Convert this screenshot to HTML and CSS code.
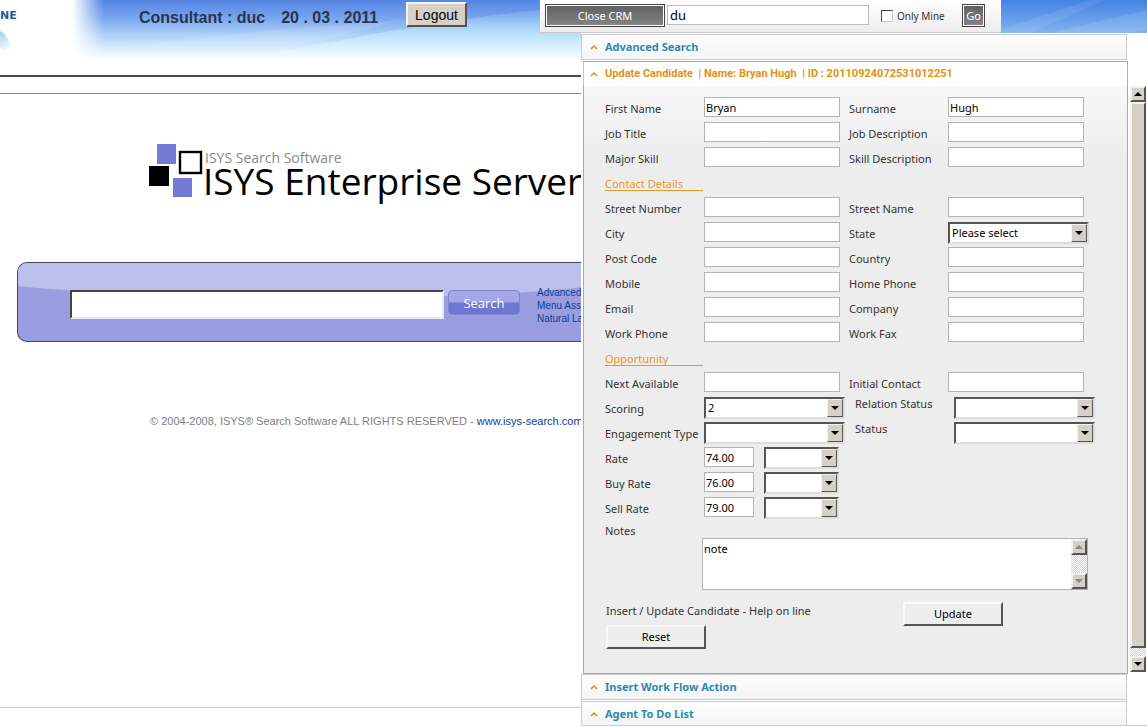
FILE: index.html
```html
<!DOCTYPE html>
<html lang="en">
<head>
<meta charset="utf-8">
<title>Update Candidate</title>
<link rel="stylesheet" href="styles.css">
</head>
<body>
<svg class="sky" viewBox="0 0 1075 58" preserveAspectRatio="none" aria-hidden="true">
  <defs>
    <linearGradient id="sky-fill" x1="0" y1="0" x2="0" y2="1">
      <stop offset="0" stop-color="#5485e4"/>
      <stop offset="0.3" stop-color="#76a3ed"/>
      <stop offset="0.6" stop-color="#aed1f8"/>
      <stop offset="0.97" stop-color="#f0f9ff"/>
      <stop offset="1" stop-color="#ffffff"/>
    </linearGradient>
    <linearGradient id="sky-right" x1="0" y1="0" x2="0" y2="1">
      <stop offset="0" stop-color="#4383e3"/>
      <stop offset="1" stop-color="#8fbdf3"/>
    </linearGradient>
    <linearGradient id="sky-ray" x1="0" y1="0" x2="0" y2="1">
      <stop offset="0" stop-color="#b5e4fd" stop-opacity="0"/>
      <stop offset="0.5" stop-color="#b8e8fe" stop-opacity="0.6"/>
      <stop offset="1" stop-color="#f6fcff" stop-opacity="0.8"/>
    </linearGradient>
    <linearGradient id="sky-fade" x1="0" y1="0" x2="1" y2="0">
      <stop offset="0" stop-color="#ffffff"/>
      <stop offset="1" stop-color="#ffffff" stop-opacity="0"/>
    </linearGradient>
  </defs>
  <rect width="1075" height="58" fill="url(#sky-fill)"/>
  <path d="M180 56C270 42 340 22 520 4H1075V58H180Z" fill="url(#sky-ray)"/>
  <path d="M0 50C80 44 130 38 200 30L330 20L180 58H0Z" fill="#ffffff" fill-opacity="0.1"/>
  <rect x="900" width="175" height="40" fill="url(#sky-right)"/>
  <path d="M929 30L1018 0H1033L943 40Z" fill="#ffffff" fill-opacity="0.08"/>
  <path d="M948 40L1075 10V30L1008 40Z" fill="#ffffff" fill-opacity="0.1"/>
  <rect width="32" height="58" fill="url(#sky-fade)"/>
</svg>

<div class="page">
  <div class="site">
    <header class="site-head">
      <div class="brand">
        <strong>NE</strong>
        <svg width="14" height="24" viewBox="0 0 14 24" aria-hidden="true">
          <defs><linearGradient id="drop" x1="0" y1="0" x2="0.4" y2="1"><stop offset="0" stop-color="#9fd2e8"/><stop offset="1" stop-color="#ffffff"/></linearGradient></defs>
          <path d="M0 0C6 1 10 12 13 22L0 17Z" fill="url(#drop)"/>
        </svg>
      </div>
      <p class="who"><span>Consultant : duc</span><span>20 . 03 . 2011</span></p>
      <button class="logout" type="button">Logout</button>
    </header>
    <div class="rules"></div>
    <main class="isys">
      <div class="logo">
        <svg width="54" height="54" viewBox="0 0 54 54" aria-hidden="true">
          <rect x="8" y="0" width="19" height="20" fill="#757bd4"/>
          <rect x="0" y="22" width="20" height="20" fill="#000000"/>
          <rect x="24" y="34" width="19" height="19" fill="#757bd4"/>
          <rect x="31" y="8" width="21" height="21" fill="#ffffff" stroke="#000000" stroke-width="2.4"/>
        </svg>
        <div class="logo-text">
          <span class="logo-small">ISYS Search Software</span>
          <span class="logo-big">ISYS Enterprise Server</span>
        </div>
      </div>
      <form class="search">
        <svg class="search-shine" viewBox="0 0 564 30" preserveAspectRatio="none" aria-hidden="true"><path d="M0 0H564V22C430 36 160 36 0 21Z" fill="#bcbfec"/></svg>
        <input class="search-input" type="text" aria-label="Search text">
        <button class="search-button" type="button">Search</button>
        <nav class="search-links"><a href="#">Advanced</a><a href="#">Menu Assist</a><a href="#">Natural La</a></nav>
      </form>
      <p class="legal">© 2004-2008, ISYS® Search Software ALL RIGHTS RESERVED - <a href="#">www.isys-search.com</a></p>
    </main>
    <div class="site-foot"></div>
  </div>

  <div class="crm">
    <div class="accordion">
      <button class="bar" type="button"><svg class="chev" viewBox="0 0 8 6" aria-hidden="true"><path d="M1 5L4 2L7 5"/></svg>Advanced Search</button>
      <section class="panel">
        <button class="bar bar-open" type="button"><svg class="chev" viewBox="0 0 8 6" aria-hidden="true"><path d="M1 5L4 2L7 5"/></svg>Update Candidate &nbsp;| Name: Bryan Hugh &nbsp;| ID : 20110924072531012251</button>
        <form class="form">
          <div class="row"><label for="first">First Name</label><input id="first" type="text" value="Bryan"><label for="sur">Surname</label><input id="sur" type="text" value="Hugh"></div>
          <div class="row"><label for="job">Job Title</label><input id="job" type="text"><label for="jobd">Job Description</label><input id="jobd" type="text"></div>
          <div class="row"><label for="skill">Major Skill</label><input id="skill" type="text"><label for="skilld">Skill Description</label><input id="skilld" type="text"></div>
          <h2 class="group">Contact Details</h2>
          <div class="row"><label for="stno">Street Number</label><input id="stno" type="text"><label for="stname">Street Name</label><input id="stname" type="text"></div>
          <div class="row"><label for="city">City</label><input id="city" type="text"><label for="state">State</label><span class="drop"><select id="state"><option>Please select</option></select><svg viewBox="0 0 14 16" aria-hidden="true"><path d="M3 6H11L7 10Z"/></svg></span></div>
          <div class="row"><label for="post">Post Code</label><input id="post" type="text"><label for="country">Country</label><input id="country" type="text"></div>
          <div class="row"><label for="mobile">Mobile</label><input id="mobile" type="text"><label for="home">Home Phone</label><input id="home" type="text"></div>
          <div class="row"><label for="email">Email</label><input id="email" type="text"><label for="company">Company</label><input id="company" type="text"></div>
          <div class="row"><label for="work">Work Phone</label><input id="work" type="text"><label for="fax">Work Fax</label><input id="fax" type="text"></div>
          <h2 class="group">Opportunity</h2>
          <div class="row"><label for="next">Next Available</label><input id="next" type="text"><label for="init">Initial Contact</label><input id="init" type="text"></div>
          <div class="row row-wide"><label for="score">Scoring</label><span class="drop"><select id="score"><option>2</option></select><svg viewBox="0 0 14 16" aria-hidden="true"><path d="M3 6H11L7 10Z"/></svg></span><label class="raised" for="rel">Relation Status</label><span class="drop"><select id="rel"><option></option></select><svg viewBox="0 0 14 16" aria-hidden="true"><path d="M3 6H11L7 10Z"/></svg></span></div>
          <div class="row row-wide"><label for="eng">Engagement Type</label><span class="drop"><select id="eng"><option></option></select><svg viewBox="0 0 14 16" aria-hidden="true"><path d="M3 6H11L7 10Z"/></svg></span><label class="raised" for="status">Status</label><span class="drop"><select id="status"><option></option></select><svg viewBox="0 0 14 16" aria-hidden="true"><path d="M3 6H11L7 10Z"/></svg></span></div>
          <div class="row row-rate"><label for="rate">Rate</label><input id="rate" type="text" value="74.00"><span class="drop"><select aria-label="Rate unit"><option></option></select><svg viewBox="0 0 14 16" aria-hidden="true"><path d="M3 6H11L7 10Z"/></svg></span></div>
          <div class="row row-rate"><label for="buy">Buy Rate</label><input id="buy" type="text" value="76.00"><span class="drop"><select aria-label="Buy rate unit"><option></option></select><svg viewBox="0 0 14 16" aria-hidden="true"><path d="M3 6H11L7 10Z"/></svg></span></div>
          <div class="row row-rate"><label for="sell">Sell Rate</label><input id="sell" type="text" value="79.00"><span class="drop"><select aria-label="Sell rate unit"><option></option></select><svg viewBox="0 0 14 16" aria-hidden="true"><path d="M3 6H11L7 10Z"/></svg></span></div>
          <label class="notes-label" for="notes">Notes</label>
          <div class="notes">
            <textarea id="notes">note</textarea>
            <div class="scroll scroll-off" aria-hidden="true">
              <svg class="cap" viewBox="0 0 12 12"><path d="M2 8H10L6 4Z"/></svg>
              <svg class="cap" viewBox="0 0 12 12"><path d="M2 4H10L6 8Z"/></svg>
            </div>
          </div>
          <div class="actions">
            <div class="help"><p>Insert / Update Candidate - Help on line</p><button class="btn" type="reset">Reset</button></div>
            <button class="btn" type="button">Update</button>
          </div>
        </form>
      </section>
      <button class="bar" type="button"><svg class="chev" viewBox="0 0 8 6" aria-hidden="true"><path d="M1 5L4 2L7 5"/></svg>Insert Work Flow Action</button>
      <button class="bar bar-last" type="button"><svg class="chev" viewBox="0 0 8 6" aria-hidden="true"><path d="M1 5L4 2L7 5"/></svg>Agent To Do List</button>
    </div>
    <div class="scroll scroll-page" aria-hidden="true">
      <svg class="cap" viewBox="0 0 12 12"><path d="M2 8H10L6 4Z"/></svg>
      <div class="thumb"></div>
      <svg class="cap" viewBox="0 0 12 12"><path d="M2 4H10L6 8Z"/></svg>
    </div>
  </div>
</div>

<form class="toolbar">
  <button class="dark dark-close" type="button">Close CRM</button>
  <input class="query" type="text" value="du" aria-label="Quick search">
  <label class="mine"><input type="checkbox">Only Mine</label>
  <button class="dark dark-go" type="button">Go</button>
</form>
</body>
</html>
```

FILE: styles.css
```css
* { box-sizing: border-box; }

body {
  margin: 0;
  position: relative;
  background: #fff;
  color: #333;
  font: 11px/14px "Noto Sans", "Open Sans", sans-serif;
}

p, h2 { margin: 0; }
button, input, select, textarea { font: inherit; color: #000; margin: 0; border-radius: 0; }
a { color: #103c94; text-decoration: none; }

.sky {
  position: absolute;
  top: 0;
  right: 0;
  width: calc(100% - 72px);
  height: 58px;
}

.page {
  position: relative;
  display: grid;
  grid-template-columns: minmax(0, 1fr) 566px;
  min-height: 100vh;
}

/* search site */
.site {
  display: flex;
  flex-direction: column;
  overflow: hidden;
  white-space: nowrap;
  font-family: "Liberation Sans", Arial, sans-serif;
}

.site-head { display: flex; align-items: flex-start; height: 75px; }
.brand { width: 139px; padding-top: 10px; color: #1b5f97; }
.brand strong { display: block; font: bold 11px/12px "DejaVu Sans", sans-serif; }
.brand svg { display: block; margin-top: 9px; }

.who {
  display: flex;
  gap: 16px;
  width: 267px;
  padding-top: 9px;
  font-size: 16px;
  line-height: 18px;
  font-weight: bold;
  color: #26364f;
}

.logout {
  width: 61px;
  height: 25px;
  margin-top: 2px;
  padding: 0;
  background: #d5d1c9;
  border: 2px solid;
  border-color: #f4f4f2 #55524e #55524e #f4f4f2;
  font-size: 14px;
}

.rules { height: 19px; border-top: 2px solid #4a4a4a; border-bottom: 1px solid #888; }
.isys { flex: 1; padding-top: 50px; }
.logo { display: flex; margin-left: 149px; }
.logo svg { flex: none; }
.logo-text { display: flex; flex-direction: column; padding-top: 5px; font-family: "Open Sans", "Noto Sans", sans-serif; }
.logo-small { padding-left: 2px; font-size: 14px; line-height: 18px; color: #888; }
.logo-big { font-size: 37px; line-height: 28px; color: #000; }

.search {
  position: relative;
  display: flex;
  align-items: flex-start;
  height: 80px;
  margin: 64px 0 0 17px;
  padding: 27px 0 0 52px;
  background: #9a9ee1;
  border: 1px solid #45466a;
  border-right: 0;
  border-radius: 10px 0 0 10px;
  overflow: hidden;
}

.search-shine { position: absolute; top: 0; left: 0; width: 100%; height: 33px; }

.search-input {
  position: relative;
  flex: none;
  width: 374px;
  height: 29px;
  background: #fff;
  border: 2px solid;
  border-color: #444 #e8e8f4 #e8e8f4 #444;
}

.search-button {
  position: relative;
  flex: none;
  width: 72px;
  height: 25px;
  margin-left: 4px;
  padding: 0;
  color: #fff;
  background: linear-gradient(#a3a7e5 0 45%, #7077d2 55%);
  border: 1px solid #8085cf;
  border-radius: 4px;
  font: 13px/20px "Open Sans", sans-serif;
}

.search-links {
  position: relative;
  display: flex;
  flex-direction: column;
  margin: -4px 0 0 17px;
  font-size: 10px;
  line-height: 13px;
}

.legal { margin: 72px 0 0 150px; color: #808080; font-size: 11px; line-height: 14px; }
.site-foot { height: 19px; border-top: 1px solid #ccc; }

/* CRM column */
.crm { display: flex; gap: 2px; margin-top: 33px; background: #fff; border-bottom: 1px solid #ccc; }
.accordion { flex: 1; display: flex; flex-direction: column; padding-top: 1px; gap: 1px; }

.bar {
  display: flex;
  align-items: center;
  gap: 7px;
  width: 546px;
  max-width: 100%;
  height: 26px;
  padding: 0 8px;
  background: linear-gradient(#fdfdfd, #f4f4f4);
  border: 1px solid #ccc;
  color: #2b8bb0;
  font-weight: bold;
  text-align: left;
  white-space: pre;
}
.bar-last { height: 24px; border-bottom: 0; }

.chev { width: 8px; height: 6px; fill: none; stroke: #e08a1e; stroke-width: 1.5; }
.panel { margin: 0 0 -1px 2px; border: 1px solid #ee82b4; background: #fff; }

.bar-open {
  width: 100%;
  height: 24px;
  padding: 0 6px;
  background: #fff;
  border: 0;
  box-shadow: -1px 0 #f7c04a, 1px 0 #f79a62;
  color: #e0920f;
  font-family: Roboto, sans-serif;
}

.form {
  height: 587px;
  padding: 11px 20px 0 21px;
  background: linear-gradient(#f8f8f8, #ededed 70px);
}

.row { display: grid; grid-template-columns: 99px 145px 99px 145px; height: 25px; align-items: start; }
.row-wide { grid-template-columns: 99px 151px 99px 145px; }
.row-rate { grid-template-columns: 99px 60px 75px; }
.row label { padding-top: 5px; white-space: nowrap; }
.row .raised { padding-top: 0; }

.row input {
  width: 136px;
  height: 20px;
  padding: 0 1px;
  background: #fff;
  border: 1px solid #b3b3b3;
}
.row-rate input { width: 50px; }

.drop {
  display: flex;
  width: 141px;
  height: 22px;
  background: #fff;
  border: 2px solid;
  border-color: #555 #ddd #ddd #555;
}
.row-rate .drop { width: 75px; }

.drop select {
  flex: 1;
  min-width: 0;
  padding: 0 2px;
  appearance: none;
  background: transparent;
  border: 0;
}

.drop svg {
  flex: none;
  width: 16px;
  height: 18px;
  background: #d5d1c9;
  border: 1px solid;
  border-color: #f2f2f2 #555 #555 #f2f2f2;
}

.group {
  width: 98px;
  height: 25px;
  padding-top: 5px;
  color: #ec971f;
  font-size: 11px;
  font-weight: normal;
}
.group::after { content: ""; display: block; margin-top: -1px; border-top: 1px solid #ec971f; }

.notes-label { display: block; height: 16px; padding-top: 2px; }

.notes {
  display: flex;
  width: 386px;
  height: 52px;
  margin-left: 97px;
  background: #fff;
  border: 1px solid #b3b3b3;
}
.notes textarea { flex: 1; padding: 3px 1px; border: 0; resize: none; background: transparent; outline: 0; overflow: hidden; }

.actions { display: flex; gap: 98px; padding: 12px 0 0 1px; align-items: flex-start; }
.help { width: 199px; white-space: nowrap; }
.help p { padding-top: 2px; margin-bottom: 7px; }

.btn {
  width: 100px;
  height: 24px;
  padding: 0;
  background: #eee;
  border: 2px solid;
  border-color: #fafafa #555 #555 #fafafa;
  outline: 0;
}

.scroll {
  display: flex;
  flex-direction: column;
  justify-content: space-between;
  width: 16px;
  background: repeating-conic-gradient(#d5d1c9 0 25%, #fff 0 50%) 0 0 / 2px 2px;
}
.cap { flex: none; width: 16px; height: 16px; background: #d5d1c9; border: 2px solid; border-color: #f2f2f2 #555 #555 #f2f2f2; }
.scroll-off .cap { fill: #888; }
.scroll-page { height: 586px; margin: 53px 1px 0 0; }
.thumb { flex: 1; margin-bottom: 8px; background: #d5d1c9; border: 2px solid; border-color: #f2f2f2 #555 #555 #f2f2f2; }

/* quick search strip */
.toolbar {
  position: absolute;
  top: 0;
  right: 146px;
  display: flex;
  align-items: flex-start;
  width: 461px;
  height: 33px;
  padding: 4px 5px 0;
  background: linear-gradient(#fff, #ececec);
  border-bottom: 1px solid #ccc;
}

.dark {
  height: 23px;
  padding: 0;
  color: #fff;
  background: linear-gradient(#606060, #858585);
  border: 1px solid #444;
  box-shadow: inset 0 0 0 1px #fff;
  font-size: 11px;
}
.dark-close { width: 120px; }
.dark-go { width: 23px; margin-left: auto; margin-right: 11px; }
.query { width: 202px; height: 20px; margin: 1px 0 0 2px; padding: 0 2px; border: 1px solid #bbb; background: #fff; font-size: 13px; }
.mine { display: flex; align-items: center; gap: 4px; height: 23px; margin-left: 12px; font-size: 10px; }
.mine input { appearance: none; width: 12px; height: 12px; background: #fff; border: 1px solid; border-color: #444 #ccc #ccc #444; }
```
